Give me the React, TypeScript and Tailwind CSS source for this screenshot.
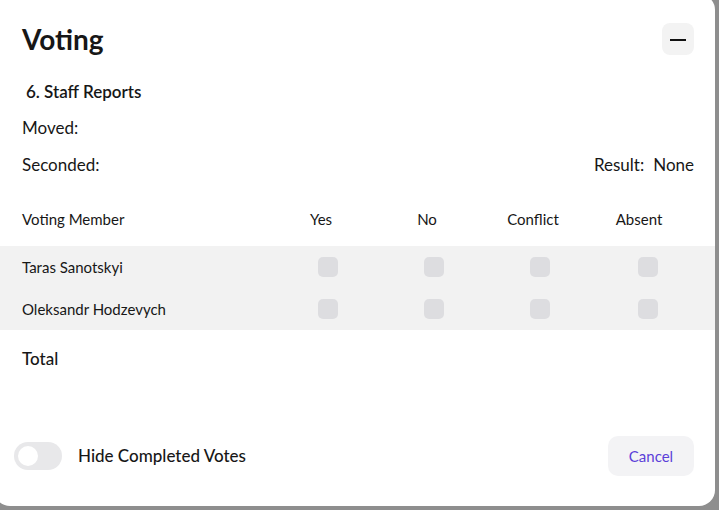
import React from "react";

const members = ["Taras Sanotskyi", "Oleksandr Hodzevych"];
const cols = ["Yes", "No", "Conflict", "Absent"];

function Box({ shift }: { shift: string }) {
  return (
    <div className={`flex justify-center ${shift}`}>
      <span className="block w-5 h-5 rounded-[5px] bg-[#dddde0]" />
    </div>
  );
}

export default function App() {
  return (
    <div className="h-[510px] w-[719px] overflow-hidden bg-[#8e8e8e]" style={{ fontFamily: "Lato, 'Noto Sans', sans-serif" }}>
      <div className="ml-[-6px] mt-[-6px] w-[721px] h-[512px] rounded-2xl bg-white flex flex-col text-[#171717]">
        <div className="pl-[28px] pr-[21px] pt-[29px]">
          <div className="flex items-center justify-between h-8">
            <h1 className="text-[28px] font-bold leading-8">Voting</h1>
            <button className="w-8 h-8 rounded-lg bg-[#f3f3f3] flex items-center justify-center">
              <span className="block w-4 h-[2px] mt-[2px] bg-[#111]" />
            </button>
          </div>
          <div className="mt-[25px] ml-[4px] h-6 leading-6 text-[17px] font-semibold">6. Staff Reports</div>
          <div className="mt-[12px] h-6 leading-6 text-[17px]">Moved:</div>
          <div className="mt-[13px] h-6 leading-6 text-[17px] flex justify-between">
            <span>Seconded:</span>
            <span className="flex gap-[9px]">
              <span>Result:</span>
              <span>None</span>
            </span>
          </div>
          <div className="mt-[22px] h-10 grid grid-cols-[246px_106px_106px_106px_106px] items-center text-[15px]">
            <span>Voting Member</span>
            {cols.map(c => (
              <span key={c} className="text-center">{c}</span>
            ))}
          </div>
        </div>
        <div className="mt-[7px] bg-[#f2f2f2] pl-[28px] pr-[21px]">
          {members.map(m => (
            <div key={m} className="h-[42px] grid grid-cols-[246px_106px_106px_106px_106px] items-center text-[15px]">
              <span>{m}</span>
              <Box shift="pl-[13px]" />
              <Box shift="pl-[13px]" />
              <Box shift="pl-[13px]" />
              <Box shift="pl-[17px]" />
            </div>
          ))}
        </div>
        <div className="mt-[17px] pl-[28px] h-6 leading-6 text-[17px] font-medium">Total</div>
        <div className="mt-auto pb-[30px] pl-[20px] pr-[21px] flex items-center justify-between">
          <div className="flex items-center gap-4">
            <div className="w-12 h-7 rounded-full bg-[#e8e8ea] flex items-center pl-1">
              <span className="block w-5 h-5 rounded-full bg-white" />
            </div>
            <span className="text-[17px] font-medium">Hide Completed Votes</span>
          </div>
          <button className="w-[86px] h-10 rounded-[10px] bg-[#f3f3f5] text-[15px] text-[#5b3fd9]">Cancel</button>
        </div>
      </div>
    </div>
  );
}
